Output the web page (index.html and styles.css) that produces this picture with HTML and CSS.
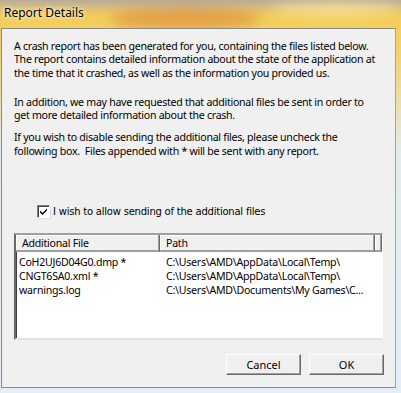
FILE: index.html
```html
<!DOCTYPE html>
<html lang="en">
<head>
<meta charset="UTF-8">
<title>Report Details</title>
<link rel="stylesheet" href="styles.css">
</head>
<body>
<div class="window">
    <div class="glow glow-a"></div>
    <div class="glow glow-b"></div>
    <div class="caption">Report Details</div>
    <div class="client">
        <p class="para">A crash report has been generated for you, containing the files listed below.<br>
        The report contains detailed information about the state of the application at<br>
        the time that it crashed, as well as the information you provided us.</p>
        <p class="para gap1">In addition, we may have requested that additional files be sent in order to<br>
        get more detailed information about the crash.</p>
        <p class="para gap2">If you wish to disable sending the additional files, please uncheck the<br>
        following box.&nbsp; Files appended with * will be sent with any report.</p>

        <label class="check">
            <span class="box">
                <svg width="9" height="9" viewBox="0 0 9 9"><path d="M1 3.5 L3.5 6 L8 1.5 L8 3.5 L3.5 8 L1 5.5 Z" fill="#000"/></svg>
            </span>
            <span class="check-text">I wish to allow sending of the additional files</span>
        </label>

        <div class="list">
            <div class="head">
                <div class="hcell col1">Additional File</div>
                <div class="hcell col2">Path</div>
                <div class="hcell col3"></div>
            </div>
            <div class="row"><span class="col1">CoH2UJ6D04G0.dmp *</span><span class="col2">C:\Users\AMD\AppData\Local\Temp\</span></div>
            <div class="row"><span class="col1">CNGT6SA0.xml *</span><span class="col2">C:\Users\AMD\AppData\Local\Temp\</span></div>
            <div class="row"><span class="col1">warnings.log</span><span class="col2">C:\Users\AMD\Documents\My Games\C...</span></div>
        </div>

        <div class="buttons">
            <div class="btn">Cancel</div>
            <div class="btn">OK</div>
        </div>
    </div>
</div>
</body>
</html>
```

FILE: styles.css
```css
body {
    margin: 0;
    width: 401px;
    height: 393px;
    overflow: hidden;
    font-family: "Liberation Sans", Arial, sans-serif;
}
.window {
    position: relative;
    width: 401px;
    height: 393px;
    background:
        linear-gradient(to bottom, rgba(255,255,255,0) 0, rgba(255,255,255,0) 60px, rgba(226,238,248,0.9) 150px, #e4eef8 393px),
        linear-gradient(to bottom, #b8ac98 0, #d8be7a 8px, #f2cc58 16px, #f4d060 30px, #f0d47a 60px);
    padding-top: 28px;
    padding-left: 1px;
    box-sizing: border-box;
    overflow: hidden;
}
.glow {
    position: absolute;
    border-radius: 50%;
    filter: blur(6px);
}
.glow-a {
    left: 110px;
    top: 8px;
    width: 150px;
    height: 22px;
    background: rgba(200, 80, 50, 0.35);
}
.glow-b {
    left: 270px;
    top: 2px;
    width: 130px;
    height: 14px;
    background: rgba(255, 240, 170, 0.6);
}
.caption {
    position: absolute;
    left: 4px;
    top: 4px;
    font-family: "Noto Sans", sans-serif;
    font-size: 12px;
    color: #000;
    text-shadow: 0 0 6px #fff8e0, 0 0 3px #fff8e0;
}
.client {
    position: relative;
    width: 395px;
    height: 360px;
    background: #f0f0f0;
    border-left: 1px solid #8a8a84;
    border-top: 1px solid #8a8a84;
    border-right: 1px solid #a8a290;
    border-bottom: 1px solid #8a8a84;
    box-sizing: border-box;
    padding: 11px 0 0 12px;
    font-size: 11px;
    color: #000;
}
.para {
    margin: 0;
    line-height: 13.3px;
    font-family: "Noto Sans", sans-serif;
    font-size: 10.6px;
    letter-spacing: -0.28px;
    white-space: nowrap;
}
.gap1 { margin-top: 16px; }
.gap2 { margin-top: 9px; }

.check {
    display: flex;
    align-items: center;
    margin: 46px 0 0 23px;
    height: 14px;
}
.box {
    width: 11px;
    height: 11px;
    background: #fff;
    border-top: 1px solid #808080;
    border-left: 1px solid #808080;
    border-right: 1px solid #fff;
    border-bottom: 1px solid #fff;
    box-shadow: inset 1px 1px 0 #404040, 1px 1px 0 #e0e0e0;
    display: flex;
    align-items: center;
    justify-content: center;
}
.check-text {
    margin-left: 3px;
    font-family: "DejaVu Sans", sans-serif;
    font-size: 10px;
    letter-spacing: -0.22px;
}

.list {
    margin: 15px 0 0 0;
    width: 369px;
    height: 107px;
    background: #fff;
    border-top: 2px solid #a0a0a0;
    border-left: 2px solid #696969;
    border-right: 1px solid #fff;
    border-bottom: 2px solid #e3e3e3;
    box-sizing: border-box;
    box-shadow: inset 1px 1px 0 #404040;
    font-family: "Noto Sans", sans-serif;
    font-size: 10.6px;
    letter-spacing: -0.25px;
}
.head {
    display: flex;
    height: 17px;
    background: #f0f0f0;
}
.hcell {
    box-sizing: border-box;
    height: 17px;
    line-height: 16px;
    border-right: 1px solid #696969;
    border-bottom: 1px solid #a0a0a0;
    box-shadow: inset -1px -1px 0 #a0a0a0, inset 1px 1px 0 #fff;
    padding-left: 6px;
}
.head .col1 { width: 146px; }
.head .col2 { width: 218px; }
.head .col3 { width: 3px; }
.row {
    display: flex;
    height: 14px;
    line-height: 14px;
}
.head + .row { margin-top: 3px; }
.row .col1 {
    width: 146px;
    padding-left: 3px;
}
.row .col2 {
    padding-left: 1px;
}

.buttons {
    display: flex;
    justify-content: flex-end;
    gap: 8px;
    margin: 14px 11px 0 0;
}
.btn {
    width: 75px;
    height: 21px;
    box-sizing: border-box;
    background: #f0f0f0;
    border-top: 1px solid #fff;
    border-left: 1px solid #fff;
    border-right: 1px solid #696969;
    border-bottom: 1px solid #696969;
    box-shadow: inset -1px -1px 0 #a0a0a0;
    text-align: center;
    line-height: 19px;
    font-family: "Noto Sans", sans-serif;
    font-size: 11px;
}
```
